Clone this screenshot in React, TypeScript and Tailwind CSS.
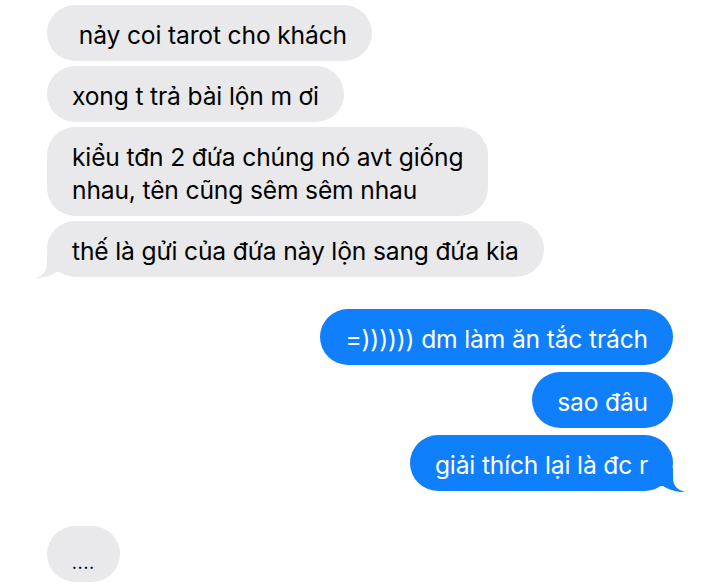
import React from 'react'

const font = { fontFamily: 'Inter, "Noto Sans", "Liberation Sans", sans-serif' }

const Tail = ({ side, color }: { side: 'left' | 'right'; color: string }) => (
  <svg
    width="28"
    height="24"
    viewBox="0 0 28 24"
    className={
      side === 'left'
        ? 'absolute -left-[12px] -bottom-[1px]'
        : 'absolute -right-[12px] -bottom-[1px] -scale-x-100'
    }
  >
    <path
      d="M12 0 L12 10 C12 17 8 22 0 24 C8 24.5 16 22 22 18 L28 18 L28 0 Z"
      fill={color}
    />
  </svg>
)

type BubbleProps = {
  text: React.ReactNode
  me?: boolean
  tail?: boolean
}

const Bubble = ({ text, me, tail }: BubbleProps) => (
  <div
    className={
      me
        ? 'relative self-end rounded-[28px] bg-[#0f7ffb] px-[25px] pt-[14px] pb-[9px] text-white'
        : 'relative self-start rounded-[28px] bg-[#e9e9eb] px-[25px] pt-[14px] pb-[9px] text-black'
    }
  >
    {tail && <Tail side={me ? 'right' : 'left'} color={me ? '#0f7ffb' : '#e9e9eb'} />}
    <p className="relative m-0 whitespace-pre text-[24.6px] leading-[33px] tracking-[-0.15px]">{text}</p>
  </div>
)

export default function App() {
  return (
    <div className="h-[584px] w-[720px] overflow-hidden bg-white pl-[47px] pr-[47px] pt-[5px]" style={font}>
      <div className="flex flex-col gap-[5px]">
        <Bubble text=" nảy coi tarot cho khách" />
        <Bubble text="xong t trả bài lộn m ơi" />
        <Bubble text={'kiểu tđn 2 đứa chúng nó avt giống\nnhau, tên cũng sêm sêm nhau'} />
        <Bubble text="thế là gửi của đứa này lộn sang đứa kia" tail />
      </div>
      <div className="mt-[32px] flex flex-col gap-[7px]">
        <Bubble me text="=)))))) dm làm ăn tắc trách" />
        <Bubble me text="sao đâu" />
        <Bubble me tail text="giải thích lại là đc r" />
      </div>
      <div className="mt-[35px] flex">
        <div className="flex h-[56px] w-[73px] items-end justify-center rounded-[28px] bg-[#e9e9eb] pb-[11px]">
          <span className="text-[15px] font-semibold leading-none tracking-[1px] text-black">....</span>
        </div>
      </div>
    </div>
  )
}
